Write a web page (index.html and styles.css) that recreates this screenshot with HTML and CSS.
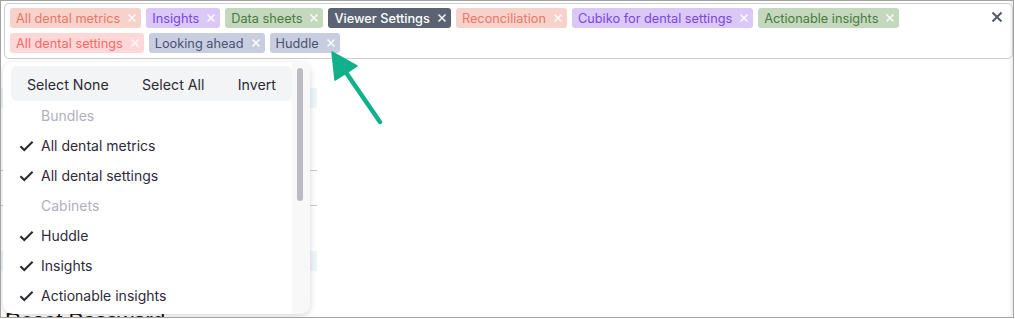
FILE: index.html
```html
<!DOCTYPE html>
<html>
<head>
<meta charset="utf-8">
<link rel="stylesheet" href="styles.css">
</head>
<body>
<div class="frame">
  <div class="control">
    <div class="tags">
      <span class="tag t-salmon">All dental metrics<svg class="tx" viewBox="0 0 10 10"><path d="M1.5 1.5L8.5 8.5M8.5 1.5L1.5 8.5"/></svg></span>
      <span class="tag t-lav">Insights<svg class="tx" viewBox="0 0 10 10"><path d="M1.5 1.5L8.5 8.5M8.5 1.5L1.5 8.5"/></svg></span>
      <span class="tag t-green">Data sheets<svg class="tx" viewBox="0 0 10 10"><path d="M1.5 1.5L8.5 8.5M8.5 1.5L1.5 8.5"/></svg></span>
      <span class="tag t-dark">Viewer Settings<svg class="tx" viewBox="0 0 10 10"><path d="M1.5 1.5L8.5 8.5M8.5 1.5L1.5 8.5"/></svg></span>
      <span class="tag t-salmon">Reconciliation<svg class="tx" viewBox="0 0 10 10"><path d="M1.5 1.5L8.5 8.5M8.5 1.5L1.5 8.5"/></svg></span>
      <span class="tag t-lav">Cubiko for dental settings<svg class="tx" viewBox="0 0 10 10"><path d="M1.5 1.5L8.5 8.5M8.5 1.5L1.5 8.5"/></svg></span>
      <span class="tag t-green">Actionable insights<svg class="tx" viewBox="0 0 10 10"><path d="M1.5 1.5L8.5 8.5M8.5 1.5L1.5 8.5"/></svg></span>
      <span class="tag t-pink">All dental settings<svg class="tx" viewBox="0 0 10 10"><path d="M1.5 1.5L8.5 8.5M8.5 1.5L1.5 8.5"/></svg></span>
      <span class="tag t-slate">Looking ahead<svg class="tx" viewBox="0 0 10 10"><path d="M1.5 1.5L8.5 8.5M8.5 1.5L1.5 8.5"/></svg></span>
      <span class="tag t-slate">Huddle<svg class="tx" viewBox="0 0 10 10"><path d="M1.5 1.5L8.5 8.5M8.5 1.5L1.5 8.5"/></svg></span>
    </div>
    <svg class="clear" viewBox="0 0 12 12"><path d="M1.5 1.5L10.5 10.5M10.5 1.5L1.5 10.5"/></svg>
  </div>

  <div class="bgpage">
    <div class="field"></div>
    <div class="rule r1"></div>
    <div class="rule r2"></div>
    <div class="field f2"></div>
    <h2 class="title">Reset Password</h2>
  </div>

  <div class="dropdown">
    <div class="list">
      <div class="bar">
        <span>Select None</span>
        <span>Select All</span>
        <span>Invert</span>
      </div>
      <div class="group">Bundles</div>
      <div class="item"><svg class="chk" viewBox="0 0 16 12"><path d="M1.5 6.2L5.6 10.2L14.5 1.5"/></svg>All dental metrics</div>
      <div class="item"><svg class="chk" viewBox="0 0 16 12"><path d="M1.5 6.2L5.6 10.2L14.5 1.5"/></svg>All dental settings</div>
      <div class="group">Cabinets</div>
      <div class="item"><svg class="chk" viewBox="0 0 16 12"><path d="M1.5 6.2L5.6 10.2L14.5 1.5"/></svg>Huddle</div>
      <div class="item"><svg class="chk" viewBox="0 0 16 12"><path d="M1.5 6.2L5.6 10.2L14.5 1.5"/></svg>Insights</div>
      <div class="item"><svg class="chk" viewBox="0 0 16 12"><path d="M1.5 6.2L5.6 10.2L14.5 1.5"/></svg>Actionable insights</div>
    </div>
    <div class="track"><div class="thumb"></div></div>
  </div>

  <svg class="arrow" width="1013" height="317" viewBox="1 1 1013 317">
    <line x1="380" y1="122" x2="345" y2="71" />
    <polygon points="332,52 357,66 335,80" />
  </svg>
</div>
</body>
</html>
```

FILE: styles.css
```css
* { box-sizing: border-box; }
html, body { margin: 0; padding: 0; background: #fff; }
body { font-family: Inter, "Open Sans", "Liberation Sans", sans-serif; }

.frame {
  position: relative;
  width: 1014px;
  height: 318px;
  border: 1px solid #a3a3a3;
  overflow: hidden;
  box-shadow: inset -5px 0 5px -4px rgba(0,0,0,0.12);
}

.control {
  margin: 2px 0 0 3px;
  height: 56px;
  border: 1px solid #cdcdcd;
  border-radius: 5px;
  padding: 4px 9px 4px 5px;
  display: flex;
  align-items: flex-start;
}
.tags {
  flex: 1;
  display: flex;
  flex-wrap: wrap;
  gap: 5px 5px;
  padding-right: 60px;
}
.tag {
  display: inline-flex;
  align-items: center;
  height: 20px;
  padding: 0 4px 0 6px;
  border-radius: 3px;
  font-size: 12.75px;
  white-space: nowrap;
}
.tx {
  width: 10px;
  height: 10px;
  margin-left: 7px;
  fill: none;
  stroke: rgba(255,255,255,0.85);
  stroke-width: 1.6;
}
.t-salmon { background: #f7d2ca; color: #e8776a; }
.t-lav { background: #dac9f6; color: #7b45e0; }
.t-green { background: #c3d8bd; color: #4b7a42; }
.t-dark { background: #5b6373; color: #fff; font-weight: 500; }
.t-pink { background: #ffd7d6; color: #f46a6a; }
.t-slate { background: #c9cde0; color: #4a5372; }
.t-slate .tx, .t-dark .tx { stroke: rgba(255,255,255,0.9); }

.clear {
  width: 12px;
  height: 12px;
  margin-top: 3px;
  fill: none;
  stroke: #545c6c;
  stroke-width: 2.1;
}

.bgpage {
  width: 316px;
  display: flex;
  flex-direction: column;
}
.field {
  margin-top: 29px;
  height: 20px;
  background: #edf6f9;
}
.rule { height: 1px; background: #c9c9c9; }
.r1 { margin-top: 62px; }
.r2 { margin-top: 34px; }
.f2 { margin-top: 45px; }
.title {
  margin: 37px 0 0 4px;
  font-family: "Liberation Sans", Arial, sans-serif;
  font-size: 22px;
  font-weight: 400;
  color: #111;
  line-height: 26px;
}

.dropdown {
  position: absolute;
  left: 2px;
  top: 61px;
  width: 307px;
  height: 252px;
  background: #fff;
  border-radius: 10px;
  box-shadow: 0 2px 7px rgba(0,0,0,0.16);
  overflow: hidden;
  display: flex;
}
.list {
  flex: 1;
  padding: 4px 0 0 8px;
}
.bar {
  height: 35px;
  background: #f3f4f6;
  border-radius: 6px;
  display: flex;
  align-items: center;
  justify-content: space-between;
  padding: 1px 16px 0 16px;
  font-size: 14.2px;
  color: #2b2b33;
}
.group {
  height: 30px;
  line-height: 30px;
  padding-left: 30px;
  font-size: 14px;
  color: #b1afbf;
}
.item {
  height: 30px;
  display: flex;
  align-items: center;
  padding-bottom: 2px;
  font-size: 14px;
  color: #2e2a3c;
}
.chk {
  width: 15px;
  height: 12px;
  margin: 2px 7px 0 8px;
  fill: none;
  stroke: #2b2b33;
  stroke-width: 2.2;
}
.track {
  width: 18px;
  background: #f8f8f9;
  padding: 6px 0 0 5px;
}
.thumb {
  width: 6px;
  height: 133px;
  border-radius: 3px;
  background: #bcbbc3;
}

.arrow {
  position: absolute;
  left: 0;
  top: 0;
  pointer-events: none;
}
.arrow line {
  stroke: #12b08b;
  stroke-width: 4.5;
  stroke-linecap: round;
}
.arrow polygon {
  fill: #12b08b;
  stroke: #12b08b;
  stroke-width: 1.5;
  stroke-linejoin: round;
}
```
